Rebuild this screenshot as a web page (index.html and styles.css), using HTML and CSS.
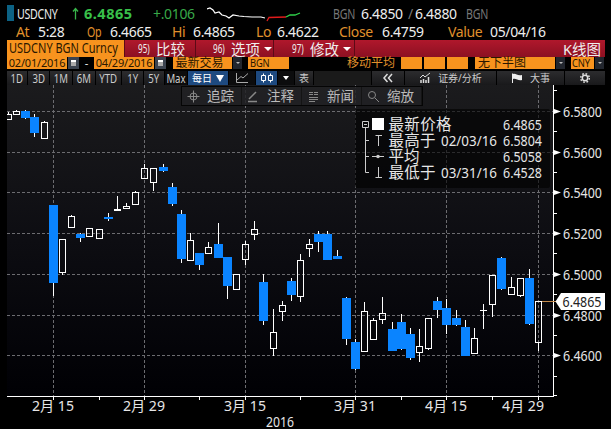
FILE: index.html
```html
<!DOCTYPE html>
<html lang="zh-CN">
  <head>
    <meta charset="UTF-8" />
    <title>USDCNY BGN Curncy</title>
    <link rel="stylesheet" href="styles.css">
  </head>
  <body>
    <div class="quote top">
      <i class="flag"></i>
      <span><b class="narrow">USDCNY</b></span>
      <svg width="11" height="17"><path d="M3.5 14.5V4M1 6.5L3.5 3.5L6 6.5" fill="none" stroke="#38b54a" stroke-width="1.3" /></svg>
      <span class="last">6.4865</span>
      <span class="change">+.0106</span>
      <svg width="126" height="17">
        <path d="M0 4L3 3L6 5L8 8L12 7L15 10L19 11L22 13L26 10L32 11L37 11.5L45 12L54 12L58 13" fill="none" stroke="#fff" stroke-width="1.2" />
        <path d="M60 16L62 12.5L79 12" fill="none" stroke="#e01b1b" stroke-width="1.3" />
        <path d="M79 12L83 10L88 10L93 8" fill="none" stroke="#2fd04a" stroke-width="1.3" />
      </svg>
      <span class="dim"><b class="narrow">BGN</b></span>
      <span>6.4850</span>
      <span class="dim">/</span>
      <span>6.4880</span>
      <span class="dim"><b class="narrow">BGN</b></span>
    </div>

    <div class="quote ohlc">
      <span class="key">At</span><span>5:28</span>
      <span class="key"><b class="narrow">Op</b></span><span>6.4665</span>
      <span class="key">Hi</span><span>6.4865</span>
      <span class="key">Lo</span><span>6.4622</span>
      <span class="key">Close</span><span>6.4759</span>
      <span class="key">Value</span><span>05/04/16</span>
    </div>

    <div class="menubar">
      <div class="ticker"><b>USDCNY BGN Curncy</b></div>
      <div class="menu"><em><b>95)</b></em>比较</div>
      <div class="menu wide"><em><b>96)</b></em>选项<i class="caret"></i></div>
      <div class="menu mod"><em><b>97)</b></em>修改<i class="caret"></i></div>
      <div class="menu title">K线图</div>
    </div>

    <div class="fields">
      <div class="field">02/01/2016</div>
      <div class="cal"><i></i></div>
      <div class="dash">-</div>
      <div class="field">04/29/2016</div>
      <div class="cal"><i></i></div>
      <div class="field cn price">最新交易</div>
      <div class="drop"><i></i></div>
      <div class="field source"><b>BGN</b></div>
      <div class="ma">移动平均</div>
      <div class="field box"></div>
      <div class="field box"></div>
      <div class="field box"></div>
      <div class="field cn lower">无下半图</div>
      <div class="drop"><i></i></div>
      <div class="field ccy"><b>CNY</b></div>
      <div class="drop"><i></i></div>
    </div>

    <div class="ranges">
      <div><b>1D</b></div>
      <div><b>3D</b></div>
      <div><b>1M</b></div>
      <div><b>6M</b></div>
      <div><b>YTD</b></div>
      <div><b>1Y</b></div>
      <div><b>5Y</b></div>
      <div class="plain"><b>Max</b></div>
      <div class="on">每日<i class="caret big"></i></div>
      <div class="plain"><svg width="14" height="12"><path d="M1.5 1V10.5H13M2 8L6 4.5L8 6L13 1.5" fill="none" stroke="#aaa" /></svg></div>
      <div class="on"><svg width="14" height="12"><path d="M1.5 3.5H5.5V8.5H1.5ZM3.5 1.5V3.5M3.5 8.5V10.5M8.5 3.5H12.5V8.5H8.5ZM10.5 1.5V3.5M10.5 8.5V10.5" fill="none" stroke="#fff" /></svg></div>
      <div class="plain"><i class="caret small"></i></div>
      <div>表</div>
      <div class="empty"></div>
      <div><svg width="12" height="12"><path d="M5.5 2L2 6L5.5 10M10 2L6.5 6L10 10" fill="none" stroke="#ddd" stroke-width="1.5" /></svg></div>
      <div class="spread"><svg width="12" height="12"><path d="M1 6L4 3L6 5L11 1" fill="none" stroke="#ddd" /><path d="M2 11V8M4.5 11V7M7 11V8M9.5 11V5" stroke="#ddd" stroke-width="1.5" /></svg>证券/分析</div>
      <div class="spread"><svg width="12" height="12"><path d="M1.5 1.5V11" stroke="#eee" /><path d="M2 2C5 1 6 4 11 3V8C7 9 5 6 2 7Z" fill="#eee" /></svg>大事</div>
      <div><svg width="12" height="12"><circle cx="6" cy="6" r="2.7" fill="none" stroke="#ddd" stroke-width="1.5" /><circle cx="6" cy="6" r="4.3" fill="none" stroke="#ddd" stroke-width="1.5" stroke-dasharray="1.69" /></svg></div>
    </div>

    <div class="chart">
      <svg width="611" height="344" viewBox="0 85 611 344">
        <defs>
          <linearGradient id="bg" x1="0" y1="0" x2="0" y2="1">
            <stop offset="0" stop-color="#1b1b1d" />
            <stop offset="0.5" stop-color="#0d0d12" />
            <stop offset="1" stop-color="#000004" />
          </linearGradient>
          <clipPath id="area"><rect x="7" y="85" width="547" height="312" /></clipPath>
        </defs>
        <rect x="7" y="85" width="547" height="312" fill="url(#bg)" />
        <g id="grid"></g>
        <g id="candles" clip-path="url(#area)"></g>

        <g class="legend">
          <rect x="355" y="109" width="195" height="79" rx="2" />
          <path d="M365.5 128V172.5H369M365.5 140.5H369M365.5 156.5H369M362.5 121.5H368.5V127.5H362.5ZM364 124.5H367M375.5 135.5H382M378.5 135.5V146M372 156.5H384M375.5 177.5H382M378.5 167V177.5" />
          <circle cx="378" cy="156.5" r="1.8" />
          <rect class="swatch" x="372" y="118" width="12" height="12" />
          <text x="388.5" y="130" textLength="63">最新价格</text>
          <text x="388.5" y="146" textLength="47">最高于</text>
          <text x="388.5" y="162" textLength="31">平均</text>
          <text x="388.5" y="178" textLength="47">最低于</text>
          <g class="num">
            <text x="441" y="146" textLength="56" lengthAdjust="spacingAndGlyphs">02/03/16</text>
            <text x="441" y="178" textLength="56" lengthAdjust="spacingAndGlyphs">03/31/16</text>
            <text x="503" y="130" textLength="39" lengthAdjust="spacingAndGlyphs">6.4865</text>
            <text x="503" y="146" textLength="39" lengthAdjust="spacingAndGlyphs">6.5804</text>
            <text x="503" y="162" textLength="39" lengthAdjust="spacingAndGlyphs">6.5058</text>
            <text x="503" y="178" textLength="39" lengthAdjust="spacingAndGlyphs">6.4528</text>
          </g>
        </g>

        <path d="M7 396.5H554M553.5 85V397" stroke="#fff" />
        <g id="axes"></g>
        <text class="axis" x="266" y="426.5" textLength="28" lengthAdjust="spacingAndGlyphs">2016</text>
        <path d="M542 301.5H556" stroke="#c48a4a" />
        <path d="M555.5 301.5L561 293H605V310H561Z" fill="#fff" />
        <text class="axis now" x="562.5" y="306.5" textLength="39" lengthAdjust="spacingAndGlyphs">6.4865</text>
      </svg>

      <div class="tools">
        <div><svg width="13" height="13"><circle cx="6.5" cy="6.5" r="3.5" /><path d="M6.5 0.5V12.5M0.5 6.5H12.5" /></svg>追踪</div>
        <div><svg width="13" height="13"><path d="M2 9L9 2M1 11.5H10" stroke-width="1.5" /></svg>注释</div>
        <div><svg width="13" height="13"><path d="M2 2.5H6M2 4.5H6M7 2.5H11M7 4.5H11M2 7.5H11M2 9.5H11M2 11.5H8" /></svg>新闻</div>
        <div><svg width="13" height="13"><circle cx="5" cy="5" r="3.5" /><path d="M8 8L12 12" /></svg>缩放</div>
      </div>
    </div>

    <script src="chart.js"></script>
  </body>
</html>
```

FILE: styles.css
```css
body {
  margin: 0;
  width: 611px;
  height: 429px;
  overflow: hidden;
  background: #000;
  color: #eee;
  font-family: "Noto Sans", "Noto Sans CJK SC", sans-serif;
  font-size: 14px;
}
b {
  font-weight: normal;
  display: inline-block;
  transform-origin: 0 50%;
}
svg {
  display: block;
  flex: none;
}
.quote {
  display: grid;
  line-height: 17px;
  height: 17px;
  white-space: nowrap;
  letter-spacing: -0.35px;
}
.quote .narrow {
  transform: scaleX(0.76);
}
.top {
  grid-template-columns: 10px 55px 12px 69px 54px 126px 28px 47px 7px 51px 40px;
  padding: 5px 0 0 7px;
}
.flag {
  width: 7px;
  height: 16px;
  background: #0c6284;
}
.last {
  color: #38c04a;
  font-weight: bold;
  font-size: 14.5px;
  letter-spacing: 0.5px;
}
.change {
  color: #38a848;
}
.dim {
  color: #777;
}
.ohlc {
  grid-template-columns: 22px 49px 23px 62px 21px 63px 21px 62px 43px 66px 42px 70px;
  padding: 1px 0 0 16px;
}
.key {
  color: #e0912c;
}
.menubar {
  display: flex;
  margin: 0 6px 0 7px;
  height: 17px;
  line-height: 16px;
  background: #a01428;
}
.ticker {
  width: 117px;
  background: #f7931e;
  color: #2a1700;
}
.ticker b {
  margin-left: 2px;
  transform: scaleX(0.785);
  white-space: nowrap;
}
.menu {
  display: flex;
  align-items: center;
  box-sizing: border-box;
  width: 71px;
  padding-left: 13px;
  border-left: 1px solid #5c0a16;
  font-size: 14.5px;
  background: linear-gradient(#b0182c, #8c1022);
}
.menu em {
  width: 18px;
  font-size: 12px;
  font-style: normal;
}
.menu em b {
  transform: scaleX(0.68);
}
.wide {
  width: 78px;
  padding-left: 17px;
}
.mod {
  width: 81px;
  padding-left: 18px;
}
.title {
  flex: 1;
  justify-content: flex-end;
  padding-right: 4px;
}
.caret {
  margin-left: 4px;
  border: 4px solid transparent;
  border-top-color: #fff;
  border-bottom: 0;
}
.fields {
  display: flex;
  margin: 0 0 0 7px;
  height: 12px;
  line-height: 12px;
  font-size: 11px;
}
.field {
  width: 60px;
  background: #f7931e;
  color: #2a1700;
  text-align: center;
  white-space: nowrap;
  letter-spacing: -0.2px;
}
.field b {
  transform: scaleX(0.85);
}
.cal,
.drop {
  display: flex;
  align-items: center;
  justify-content: center;
  width: 11px;
  margin-left: 1px;
  background: #3c4450;
}
.cal i {
  width: 5px;
  height: 4px;
  border-top: 2px solid #fff;
  background: #aaa;
}
.drop {
  width: 9px;
  background: #22262e;
}
.drop i {
  border: 2px solid transparent;
  border-top-color: #bbb;
  border-bottom: 0;
}
.dash {
  width: 15px;
  text-align: center;
}
.cn {
  font-size: 12px;
  letter-spacing: 0;
}
.price {
  width: 59px;
  margin-left: 7px;
  text-indent: -6px;
}
.source {
  width: 39px;
  margin-left: 6px;
  padding-left: 2px;
  text-align: left;
}
.ma {
  width: 53px;
  margin-left: 58px;
  color: #e0912c;
  font-size: 12px;
  white-space: nowrap;
}
.box {
  width: 21px;
  margin-left: 1px;
  margin-right: 1px;
}
.lower {
  width: 77px;
  margin-left: 6px;
  padding-left: 3px;
  text-align: left;
}
.ccy {
  width: 23px;
  margin-left: 6px;
}
.ranges {
  display: grid;
  grid-template-columns: 20px 21px 22px 22px 25px 21px 20px 22px 40px 26px 21px 16px 18px 57px 32px 91px 67px 40px;
  column-gap: 1px;
  margin: 2px 0 0 7px;
  width: 598px;
  height: 14px;
  line-height: 13px;
  font-size: 10px;
}
.ranges div {
  display: flex;
  align-items: center;
  justify-content: center;
  min-width: 0;
  background: linear-gradient(#2c2c2e, #19191b);
  color: #ccc;
  white-space: nowrap;
}
.ranges b {
  font-size: 12px;
  transform: scaleX(0.8);
  transform-origin: 50% 50%;
}
.ranges .plain {
  background: #0c0c0d;
}
.ranges .on {
  background: #1e4a80;
  color: #fff;
}
.ranges .empty {
  background: #1a1a1a;
}
.ranges .caret.big {
  margin-left: 4px;
  border-width: 7px 4px 0;
}
.ranges .caret.small {
  margin-left: 0;
  border-width: 4px 3px 0;
}
.ranges .spread {
  gap: 7px;
}
.chart {
  position: relative;
  height: 344px;
}
.tools {
  position: absolute;
  left: 181px;
  top: 1px;
  display: flex;
  height: 20px;
  border: 1px solid #050505;
  box-sizing: border-box;
  background: rgba(34, 34, 36, 0.85);
}
.tools div {
  display: flex;
  align-items: center;
  box-sizing: border-box;
  width: 60px;
  padding-left: 5px;
  gap: 7px;
  border-right: 1px solid #141414;
  color: #bbb;
  font-size: 13.5px;
  line-height: 18px;
}
.tools svg {
  fill: none;
  stroke: #888;
}
#grid path {
  stroke: #6c6c70;
  stroke-dasharray: 3 2;
}
.up {
  fill: none;
  stroke: #fff;
}
.down {
  fill: #0a84ff;
}
.wick {
  stroke: #fff;
}
.axis {
  fill: #e6e6e6;
  font-size: 14px;
}
.axis.now {
  fill: #222;
}
.tick {
  stroke: #fff;
}
.arrow {
  fill: #fff;
}
.legend rect {
  fill: rgba(0, 0, 0, 0.6);
}
.legend text {
  fill: #e6e6e6;
  font-size: 15.5px;
}
.legend .num text {
  font-size: 14px;
}
.legend path {
  fill: none;
  stroke: #ccc;
}
.legend circle {
  fill: #ccc;
}
.legend .swatch {
  fill: #fff;
}
```

FILE: chart.js
```javascript
// x, high, body top, body bottom, low, direction (1 = up, 0 = down)
const candles = [
  [8, 112, 114, 120, 120, 1], [16, 110, 111, 115, 115, 1],
  [25, 110, 111, 118, 119, 0], [34, 114, 117, 133, 137, 0],
  [44, 121, 122, 139, 139, 1], [53, 205, 205, 283, 296, 0],
  [62, 239, 239, 273, 275, 1], [71, 215, 216, 228, 228, 1],
  [80, 233, 234, 238, 242, 0], [89, 228, 228, 237, 237, 1],
  [99, 229, 229, 239, 239, 1], [108, 213, 217, 219, 221, 0],
  [117, 196, 209, 211, 211, 1], [126, 203, 206, 209, 209, 1],
  [135, 191, 192, 205, 205, 1], [144, 164, 168, 179, 179, 1],
  [153, 168, 168, 183, 191, 1], [163, 164, 167, 171, 172, 0],
  [172, 183, 187, 204, 206, 0], [181, 210, 214, 259, 263, 0],
  [190, 233, 240, 261, 261, 1], [199, 253, 253, 265, 270, 0],
  [208, 242, 247, 254, 254, 1], [218, 223, 244, 258, 258, 0],
  [227, 257, 257, 286, 299, 0], [236, 274, 274, 290, 290, 1],
  [245, 241, 244, 260, 265, 1], [254, 221, 229, 235, 240, 1],
  [263, 274, 282, 321, 325, 0], [273, 309, 332, 349, 356, 1],
  [282, 301, 305, 312, 321, 1], [291, 278, 281, 295, 301, 0],
  [300, 254, 260, 297, 302, 1], [309, 239, 244, 249, 257, 1],
  [318, 231, 234, 242, 252, 0], [327, 231, 234, 260, 260, 0],
  [337, 250, 256, 259, 259, 0], [346, 297, 298, 339, 345, 0],
  [355, 339, 342, 369, 370, 0], [364, 302, 311, 352, 352, 1],
  [373, 318, 320, 340, 340, 1], [382, 297, 313, 320, 324, 1],
  [392, 322, 329, 351, 351, 0], [401, 314, 322, 349, 350, 0],
  [410, 328, 334, 358, 360, 0], [419, 329, 346, 353, 362, 1],
  [428, 318, 318, 349, 350, 1], [437, 297, 301, 310, 318, 0],
  [446, 299, 308, 325, 334, 0], [456, 310, 318, 325, 326, 0],
  [465, 320, 327, 356, 356, 0], [474, 328, 338, 354, 354, 1],
  [483, 304, 310, 311, 329, 1], [492, 275, 275, 305, 317, 1],
  [501, 257, 258, 289, 290, 0], [511, 277, 287, 295, 295, 1],
  [520, 278, 278, 296, 297, 1], [529, 269, 278, 324, 325, 0],
  [538, 301, 301, 343, 351, 1]
];

const prices = [
  [111, "6.5800"], [152, "6.5600"], [192, "6.5400"], [233, "6.5200"],
  [274, "6.5000"], [315, "6.4800"], [355, "6.4600"]
];
// tick x, label x, text
const dates = [
  [53, 32, "2月 15"], [144, 123, "2月 29"], [245, 224, "3月 15"],
  [355, 334, "3月 31"], [446, 425, "4月 15"], [538, 502, "4月 29"]
];

let body = "";
candles.forEach(([x, high, top, bottom, low, up]) => {
  const c = x + 0.5;
  if (high < top) body += `<path class="wick" d="M${c} ${high}V${top}"/>`;
  if (low > bottom) body += `<path class="wick" d="M${c} ${bottom}V${low}"/>`;
  if (bottom - top < 2) {
    body += `<path class="wick" d="M${x - 3} ${top + 0.5}H${x + 4}"/>`;
  } else if (up) {
    body += `<rect class="up" x="${x - 2.5}" y="${top + 0.5}" width="6" height="${bottom - top - 1}"/>`;
  } else {
    body += `<rect class="down" x="${x - 4}" y="${top}" width="9" height="${bottom - top}"/>`;
  }
});
document.getElementById("candles").innerHTML = body;

let grid = "";
let axes = "";
prices.forEach(([y, label]) => {
  grid += `<path d="M7 ${y + 0.5}H553"/>`;
  axes += `<path class="arrow" d="M554 ${y - 2}L561 ${y + 0.5}L554 ${y + 3}Z"/>`;
  axes += `<text class="axis" x="563" y="${y + 5.5}" textLength="39" lengthAdjust="spacingAndGlyphs">${label}</text>`;
});
dates.forEach(([x, tx, label]) => {
  grid += `<path d="M${x + 0.5} 85V396"/>`;
  axes += `<path class="tick" d="M${x + 0.5} 397V400"/>`;
  axes += `<text class="axis" x="${tx}" y="411" textLength="42" lengthAdjust="spacingAndGlyphs">${label}</text>`;
});
[90, 131, 172, 213, 253, 294, 335, 376, 395].forEach((y) => {
  axes += `<path class="tick" d="M554 ${y + 0.5}H557"/>`;
});
[99, 199, 300, 401, 492].forEach((x) => {
  axes += `<path class="tick" d="M${x + 0.5} 397V400"/>`;
});
document.getElementById("grid").innerHTML = grid;
document.getElementById("axes").innerHTML = axes;
```
